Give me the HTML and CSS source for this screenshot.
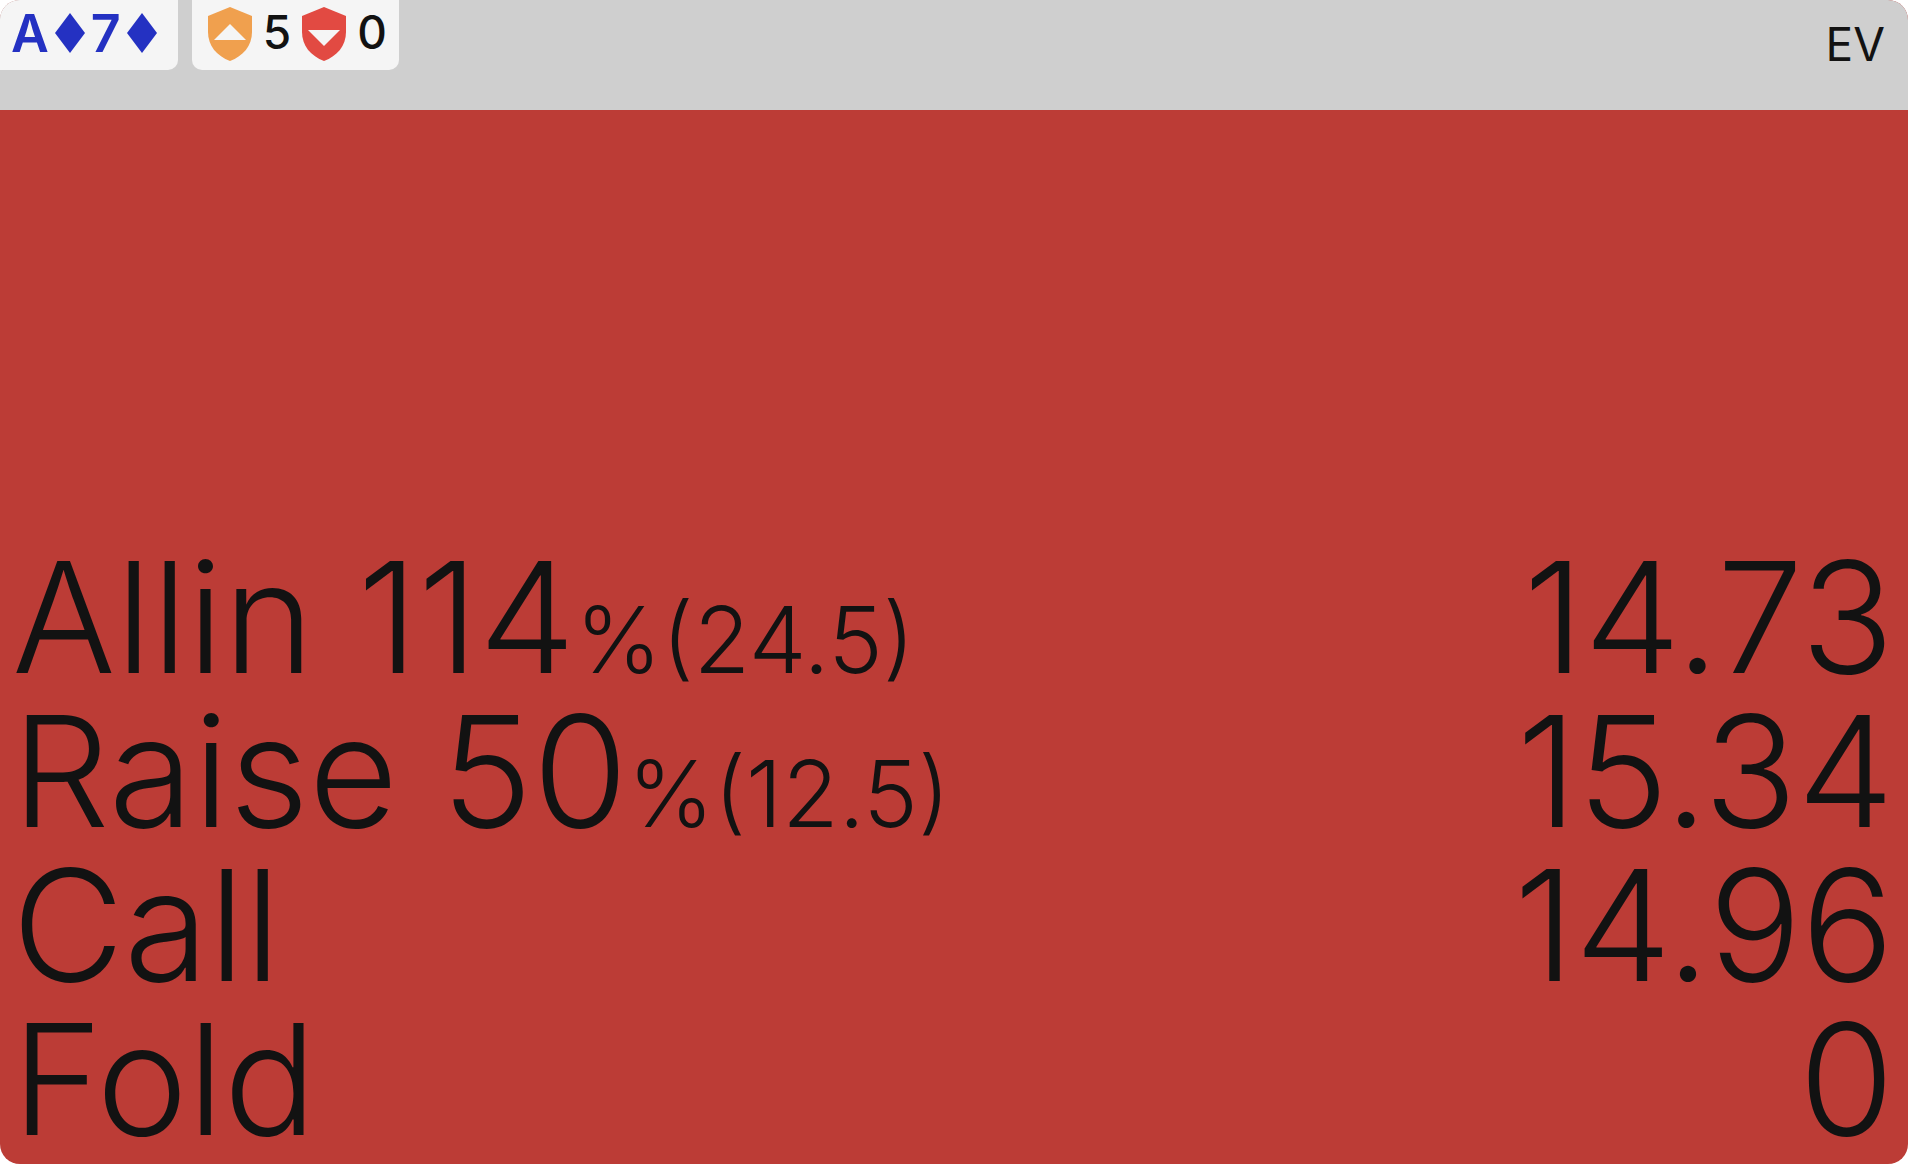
FILE: index.html
```html
<!DOCTYPE html>
<html lang="en">
    <head>
        <meta charset="utf-8">
        <meta name="viewport" content="width=device-width, initial-scale=1">
        <title>A♦7♦ strategy</title>
        <link rel="stylesheet" href="styles.css">
    </head>
    <body>
        <div class="cell">
            <div class="header">
                <div class="badge hand">
                    <span>A</span>
                    <svg class="suit" viewBox="0 0 32 40"><path d="M16 0 L31 20 L16 40 L1 20 Z"/></svg>
                    <span>7</span>
                    <svg class="suit" viewBox="0 0 32 40"><path d="M16 0 L31 20 L16 40 L1 20 Z"/></svg>
                </div>
                <div class="badge blockers">
                    <svg class="shield" viewBox="0 0 44 54">
                        <path fill="#f0a04e" d="M22 0 L44 9 V25 C44 39 35 49 22 54 C9 49 0 39 0 25 V9 Z"/>
                        <path fill="#f5f5f5" d="M22 17 L38 33 H6 Z"/>
                    </svg>
                    <span class="count">5</span>
                    <svg class="shield" viewBox="0 0 44 54">
                        <path fill="#e24a42" d="M22 0 L44 9 V25 C44 39 35 49 22 54 C9 49 0 39 0 25 V9 Z"/>
                        <path fill="#f5f5f5" d="M22 39 L38 23 H6 Z"/>
                    </svg>
                    <span class="count">0</span>
                </div>
                <div class="ev-label">EV</div>
            </div>
            <div class="actions">
                <div class="row">
                    <div>Allin 114<span class="small">%(24.5)</span></div>
                    <div>14.73</div>
                </div>
                <div class="row">
                    <div>Raise 50<span class="small">%(12.5)</span></div>
                    <div>15.34</div>
                </div>
                <div class="row">
                    <div>Call</div>
                    <div>14.96</div>
                </div>
                <div class="row">
                    <div>Fold</div>
                    <div>0</div>
                </div>
            </div>
        </div>
    </body>
</html>
```
FILE: styles.css
```css
body {
    margin: 0;
    background-color: #fff;
    font-family: Inter, "Liberation Sans", sans-serif;
    color: #121212;
}

.cell {
    display: flex;
    flex-direction: column;
    min-height: 100vh;
    border-radius: 20px;
    overflow: hidden;
    background-color: #bc3c36;
}

/* top bar with the hand and blocker badges */
.header {
    display: flex;
    align-items: flex-start;
    gap: 14px;
    height: 110px;
    background-color: #cfcfcf;
}

.badge {
    display: flex;
    align-items: center;
    box-sizing: border-box;
    height: 70px;
    background-color: #f5f5f5;
}

.hand {
    padding: 0 20px 4px 11px;
    gap: 5px;
    border-radius: 0 0 10px 0;
    font-size: 52px;
    font-weight: 600;
    color: #2431c2;
}

.suit {
    width: 32px;
    height: 40px;
    fill: #2431c2;
}

.blockers {
    padding: 0 12px 2px 16px;
    gap: 11px;
    border-radius: 0 0 10px 10px;
    font-size: 46px;
    font-weight: 500;
}

.count {
    padding-bottom: 4px;
}

.shield {
    width: 44px;
    height: 54px;
}

.ev-label {
    margin-left: auto;
    padding: 20px 23px 0 0;
    font-size: 46px;
    line-height: 48px;
    font-weight: 400;
}

/* action rows sit at the bottom of the cell */
.actions {
    flex: 1;
    display: flex;
    flex-direction: column;
    justify-content: flex-end;
    padding: 0 14px 8px 12px;
    font-size: 154px;
    line-height: 154px;
    font-weight: 300;
}

.row {
    display: flex;
    justify-content: space-between;
}

.small {
    font-size: 92px;
    line-height: 92px;
}
```
